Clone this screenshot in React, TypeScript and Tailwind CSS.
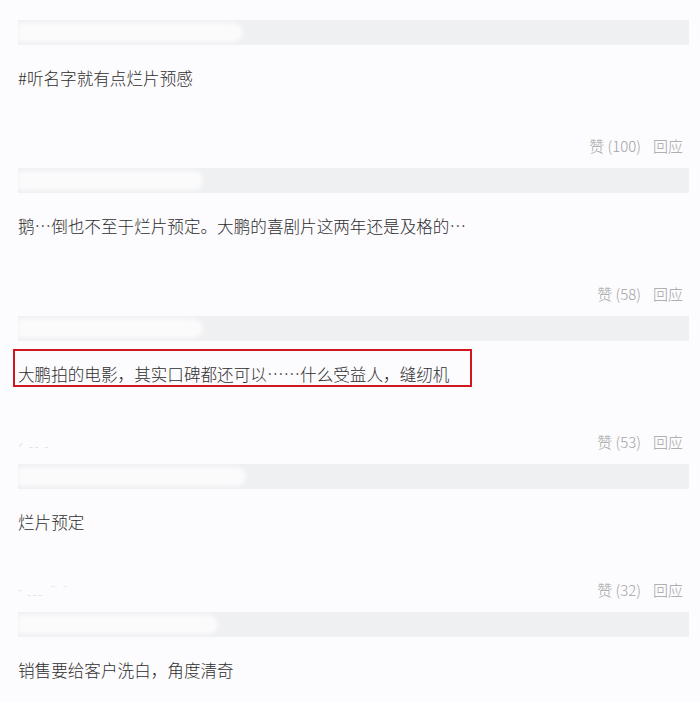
import React from "react";

type Item = { text: string; likes?: number; whiteW: number; boxed?: boolean; marksBottom?: string };

const font = { fontFamily: '"Noto Sans CJK SC", "Noto Sans", sans-serif' };

function Bar({ whiteW }: { whiteW: number }) {
  return (
    <div className="relative h-[25px] w-full bg-[#eff0f2] overflow-hidden">
      <div
        className="absolute left-0 top-[3px] h-[19px] bg-[#fbfbfc] blur-[2px] rounded-r-[10px]"
        style={{ width: whiteW }}
      />
    </div>
  );
}

function Block({ item, last }: { item: Item; last?: boolean }) {
  return (
    <div className={last ? "flex flex-col" : "flex flex-col mb-[12px]"}>
      <Bar whiteW={item.whiteW} />
      <div className="relative mt-[21px] h-[24px] leading-[24px] text-[16.6px] font-light text-[#2e2e2e] whitespace-nowrap">
        {item.text}
        {item.boxed && (
          <div className="absolute left-[-5px] top-[-13px] w-[459px] h-[38px] border-2 border-[#d0161e]" />
        )}
      </div>
      {item.likes !== undefined && (
        <div className="relative mt-[46px] h-[20px] flex justify-end items-center pr-[6px] text-[15px] leading-[20px] font-light text-[#a3a3a3]">
          {item.marksBottom && (
            <span className="absolute left-[0px] top-[0px] text-[10px] tracking-[2px] text-[#c9ced6]">
              {item.marksBottom}
            </span>
          )}
          <span>赞 ({item.likes})</span>
          <span className="ml-[12px]">回应</span>
        </div>
      )}
    </div>
  );
}

export default function App() {
  const items: Item[] = [
    { text: "#听名字就有点烂片预感", likes: 100, whiteW: 225 },
    { text: "鹅…倒也不至于烂片预定。大鹏的喜剧片这两年还是及格的…", likes: 58, whiteW: 185 },
    {
      text: "大鹏拍的电影，其实口碑都还可以……什么受益人，缝纫机",
      boxed: true,
      likes: 53,
      whiteW: 185,
      marksBottom: "⸝ ˍˍ ˍ",
    },
    { text: "烂片预定", likes: 32, whiteW: 228, marksBottom: "  ˗ ˍˍˍ ˉˉ" },
    { text: "销售要给客户洗白，角度清奇", whiteW: 200 },
  ];
  return (
    <div className="w-[700px] h-[702px] bg-[#fcfbfd] overflow-hidden" style={font}>
      <div className="ml-[18px] w-[671px] pt-[20px] flex flex-col">
        {items.map((it, i) => (
          <Block key={i} item={it} last={i === items.length - 1} />
        ))}
      </div>
    </div>
  );
}
